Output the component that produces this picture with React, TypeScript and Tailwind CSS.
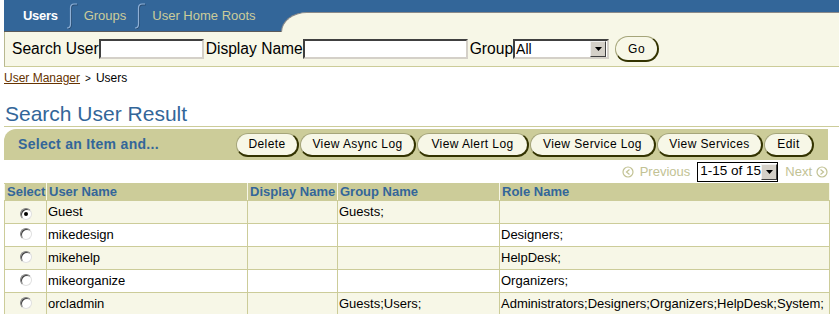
import React from "react";

const users = [
  { name: "Guest", group: "Guests;", role: "", checked: true },
  { name: "mikedesign", group: "", role: "Designers;" },
  { name: "mikehelp", group: "", role: "HelpDesk;" },
  { name: "mikeorganize", group: "", role: "Organizers;" },
  { name: "orcladmin", group: "Guests;Users;", role: "Administrators;Designers;Organizers;HelpDesk;System;" },
];

const actions = [
  { label: "Delete", w: "w-[63px]" },
  { label: "View Async Log", w: "w-[116px]" },
  { label: "View Alert Log", w: "w-[112px]" },
  { label: "View Service Log", w: "w-[126px]" },
  { label: "View Services", w: "w-[106px]" },
  { label: "Edit", w: "w-[50px]" },
];

// the little "integral" divider between tabs
const TabDivider = () => (
  <svg width="12" height="26" viewBox="0 0 12 26">
    <path d="M1 25 Q4.5 25 4.5 21 L4.5 5 Q4.5 1 8 1 L11 1" fill="none" stroke="#2a4d73" strokeWidth="1.2" transform="translate(0.8 0.8)" />
    <path d="M1 25 Q4.5 25 4.5 21 L4.5 5 Q4.5 1 8 1 L11 1" fill="none" stroke="#8fb0d6" strokeWidth="1.2" />
  </svg>
);

const Radio = ({ checked }: { checked?: boolean }) => (
  <span className="inline-flex items-center justify-center w-[12px] h-[12px] rounded-full bg-white border border-t-[#808080] border-l-[#808080] border-b-[#e0e0e0] border-r-[#e0e0e0] shadow-[inset_1px_1px_0_#404040]">
    {checked && <span className="w-[4px] h-[4px] rounded-full bg-black" />}
  </span>
);

const DropArrow = () => (
  <span className="flex shrink-0 items-center justify-center w-[16px] h-[16px] bg-[#d4d0c8] border border-t-[#f0f0f0] border-l-[#f0f0f0] border-b-[#404040] border-r-[#404040]">
    <svg width="7" height="4" viewBox="0 0 7 4">
      <path d="M0 0 L7 0 L3.5 4 Z" fill="#000" />
    </svg>
  </span>
);

const PageIcon = ({ dir }: { dir: "left" | "right" }) => (
  <svg width="12" height="12" viewBox="0 0 12 12">
    <circle cx="6" cy="6" r="5" fill="none" stroke="#c2c294" strokeWidth="1.2" />
    {dir === "left" ? (
      <path d="M7.5 3.5 L4.5 6 L7.5 8.5" fill="none" stroke="#c2c294" strokeWidth="1.2" />
    ) : (
      <path d="M4.5 3.5 L7.5 6 L4.5 8.5" fill="none" stroke="#c2c294" strokeWidth="1.2" />
    )}
  </svg>
);

const inputCls =
  "h-[20px] bg-white border-2 border-t-[#404040] border-l-[#404040] border-b-[#d4d0c8] border-r-[#d4d0c8]";

export default function App() {
  return (
    <div className="w-[839px] h-[314px] overflow-hidden bg-white font-['Liberation_Sans',Arial,sans-serif] text-black">
      {/* tab bar */}
      <div className="ml-[4px] h-[32px] bg-[#336699] flex">
        <div className="w-[277px] border-b border-[#5a5a5a] flex items-center pl-[19px] pt-[1px]">
          <span className="text-white font-bold text-[13px] tracking-[-0.3px]">Users</span>
          <span className="ml-[8px] mr-[6px] flex"><TabDivider /></span>
          <span className="text-[#cccc99] text-[13px]">Groups</span>
          <span className="ml-[8px] mr-[6px] flex"><TabDivider /></span>
          <span className="text-[#cccc99] text-[13px]">User Home Roots</span>
        </div>
        <div className="flex-1 flex flex-col justify-end">
          <div className="h-[20px] bg-[#f7f7e7] rounded-tl-[26px_20px] border-t border-l border-[#8a8a8a]" />
        </div>
      </div>

      {/* search row */}
      <div className="ml-[4px] h-[35px] bg-[#f7f7e7] border-l border-[#b8b88f] border-b border-b-[#cccc99] flex items-center pl-[7px] text-[15.6px]">
        <span>Search User</span>
        <span className={`${inputCls} w-[105px]`} />
        <span className="ml-[2px]">Display Name</span>
        <span className={`${inputCls} w-[165px]`} />
        <span className="ml-[2px]">Group</span>
        <span className={`${inputCls} w-[96px] flex items-center justify-between text-[14px] pl-[1px] pr-[1px]`}>
          <span>All</span>
          <DropArrow />
        </span>
        <button className="ml-[6px] w-[44px] h-[26px] rounded-full bg-[#f7f7e7] border border-t-[#a5a57a] border-l-[#a5a57a] border-b-2 border-r-2 border-b-[#333300] border-r-[#333300] text-[12px] tracking-[0.5px]">
          Go
        </button>
      </div>

      {/* breadcrumb */}
      <div className="h-[20px] mt-[1px] flex items-center pl-[4px] text-[12px]">
        <span className="text-[#663300] underline">User Manager</span>
        <span className="ml-[5px] text-[10px]">&gt;</span>
        <span className="ml-[5px]">Users</span>
      </div>

      {/* title */}
      <div className="ml-[4px] mt-[14px] leading-[24px] text-[21px] text-[#336699] pl-px border-b border-[#cccc99]">
        Search User Result
      </div>

      {/* action bar */}
      <div className="ml-[4px] w-[824px] mt-[2px] h-[31px] bg-[#cccc99] rounded-tl-[12px] flex items-center">
        <span className="pl-[14px] text-[14px] font-bold text-[#336699] tracking-[0.3px]">Select an Item and...</span>
        <div className="ml-auto mr-[14px] flex gap-[1px]">
          {actions.map((a) => (
            <button
              key={a.label}
              className={`${a.w} h-[24px] rounded-full bg-[#f7f7e7] border border-t-[#a5a57a] border-l-[#a5a57a] border-b-2 border-r-2 border-b-[#333300] border-r-[#333300] text-[12px] tracking-[0.4px]`}
            >
              {a.label}
            </button>
          ))}
        </div>
      </div>

      {/* pagination */}
      <div className="w-[828px] h-[23px] flex items-center justify-end text-[13px] text-[#c2c294]">
        <PageIcon dir="left" />
        <span className="ml-[6px]">Previous</span>
        <span className="ml-[7px] w-[81px] h-[20px] bg-white border border-black flex items-center justify-between text-black text-[13.5px] pl-[2px] whitespace-nowrap overflow-hidden">
          <span>1-15 of 15</span>
          <DropArrow />
        </span>
        <span className="ml-[7px]">Next</span>
        <span className="ml-[4px]"><PageIcon dir="right" /></span>
      </div>

      {/* results table */}
      <table className="ml-[4px] w-[825px] table-fixed border-collapse text-[13px]">
        <colgroup>
          <col className="w-[42px]" />
          <col className="w-[201px]" />
          <col className="w-[90px]" />
          <col className="w-[162px]" />
          <col className="w-[330px]" />
        </colgroup>
        <thead>
          <tr className="bg-[#cccc99] text-[#336699] text-left font-bold">
            {["Select", "User Name", "Display Name", "Group Name", "Role Name"].map((h) => (
              <th key={h} className="h-[17px] px-[2px] leading-[16px] border-x border-x-[#f7f7e7] border-y border-y-[#cccc99] whitespace-nowrap overflow-hidden">
                {h}
              </th>
            ))}
          </tr>
        </thead>
        <tbody>
          {users.map((u, i) => (
            <tr key={u.name} className={i % 2 === 0 ? "bg-[#f7f7e7]" : "bg-white"}>
              <td className="h-[23px] border border-[#cccc99] text-center leading-none">
                <Radio checked={u.checked} />
              </td>
              <td className="border border-[#cccc99] px-[1px]">{u.name}</td>
              <td className="border border-[#cccc99] px-[1px]"></td>
              <td className="border border-[#cccc99] px-[1px]">{u.group}</td>
              <td className="border border-[#cccc99] px-[1px] whitespace-nowrap overflow-hidden">{u.role}</td>
            </tr>
          ))}
        </tbody>
      </table>
    </div>
  );
}
